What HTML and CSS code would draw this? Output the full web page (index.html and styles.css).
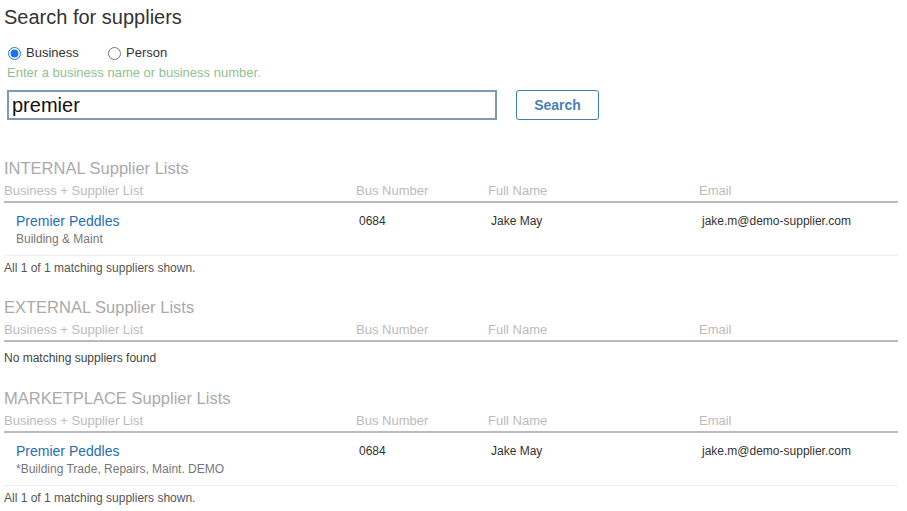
FILE: index.html
```html
<!DOCTYPE html>
<html lang="en">
<head>
    <meta charset="UTF-8">
    <meta name="viewport" content="width=device-width, initial-scale=1.0">
    <title>Search for suppliers</title>
    <link rel="stylesheet" href="styles.css">
</head>
<body>
    <div class="page">
        <h1 class="title">Search for suppliers</h1>

        <!-- Search form -->
        <div class="search-type">
            <label class="radio"><input type="radio" name="kind" checked> Business</label>
            <label class="radio"><input type="radio" name="kind"> Person</label>
        </div>
        <p class="hint">Enter a business name or business number.</p>
        <div class="search-row">
            <input type="text" class="search-input" value="premier">
            <button class="search-btn">Search</button>
        </div>

        <!-- Internal -->
        <div class="list">
            <h2 class="list-title">INTERNAL Supplier Lists</h2>
            <div class="grid head">
                <div>Business + Supplier List</div>
                <div>Bus Number</div>
                <div>Full Name</div>
                <div>Email</div>
            </div>
            <div class="grid row">
                <div class="biz">
                    <a href="#">Premier Peddles</a>
                    <span class="sub">Building &amp; Maint</span>
                </div>
                <div>0684</div>
                <div>Jake May</div>
                <div>jake.m@demo-supplier.com</div>
            </div>
            <p class="count">All 1 of 1 matching suppliers shown.</p>
        </div>

        <!-- External -->
        <div class="list">
            <h2 class="list-title">EXTERNAL Supplier Lists</h2>
            <div class="grid head">
                <div>Business + Supplier List</div>
                <div>Bus Number</div>
                <div>Full Name</div>
                <div>Email</div>
            </div>
            <p class="empty">No matching suppliers found</p>
        </div>

        <!-- Marketplace -->
        <div class="list">
            <h2 class="list-title">MARKETPLACE Supplier Lists</h2>
            <div class="grid head">
                <div>Business + Supplier List</div>
                <div>Bus Number</div>
                <div>Full Name</div>
                <div>Email</div>
            </div>
            <div class="grid row">
                <div class="biz">
                    <a href="#">Premier Peddles</a>
                    <span class="sub">*Building Trade, Repairs, Maint. DEMO</span>
                </div>
                <div>0684</div>
                <div>Jake May</div>
                <div>jake.m@demo-supplier.com</div>
            </div>
            <p class="count">All 1 of 1 matching suppliers shown.</p>
        </div>
    </div>
</body>
</html>
```

FILE: styles.css
```css
* {
    margin: 0;
    padding: 0;
    box-sizing: border-box;
}

body {
    font-family: 'Liberation Sans', Arial, sans-serif;
    color: #333;
    background: #fff;
}

.page {
    width: 894px;
    margin-left: 4px;
    padding-top: 5px;
}

.title {
    font-size: 20px;
    font-weight: normal;
    color: #333;
    line-height: 24px;
}

.search-type {
    display: flex;
    margin-top: 16px;
    margin-left: 3px;
    font-size: 13px;
    line-height: 16px;
}

.radio {
    display: flex;
    align-items: center;
    gap: 5px;
    width: 100px;
}

.radio input {
    width: 13px;
    height: 13px;
    margin: 0 0 0 1px;
    accent-color: #1a73e8;
}

.hint {
    margin-top: 5px;
    margin-left: 3px;
    font-size: 13px;
    line-height: 14px;
    color: #8fc18f;
}

.search-row {
    display: flex;
    align-items: center;
    gap: 19px;
    margin-top: 10px;
    margin-left: 3px;
}

.search-input {
    width: 490px;
    height: 30px;
    padding: 0 3px;
    border: 2px solid #7d9ab7;
    font-family: inherit;
    font-size: 20px;
    color: #111;
    outline: none;
}

.search-btn {
    width: 83px;
    height: 30px;
    background: #fff;
    border: 1px solid #3d7db8;
    border-radius: 3px;
    color: #4a7fb5;
    font-family: inherit;
    font-size: 14px;
    font-weight: bold;
    cursor: pointer;
}

.list {
    margin-top: 38px;
}

.list + .list {
    margin-top: 22px;
}

.list-title {
    font-size: 16.5px;
    font-weight: normal;
    color: #aaa;
    line-height: 20px;
}

.grid {
    display: grid;
    grid-template-columns: 352px 132px 211px 1fr;
}

.head {
    margin-top: 5px;
    padding-bottom: 2px;
    border-bottom: 2px solid #bbb;
    font-size: 13px;
    line-height: 16px;
    color: #bbb;
}

.row {
    padding: 10px 0 7px;
    border-bottom: 1px solid #eee;
    font-size: 12px;
    line-height: 16px;
    color: #333;
}

.row > div {
    padding-left: 3px;
}

.row > .biz {
    display: flex;
    flex-direction: column;
    padding-left: 12px;
}

.biz a {
    color: #1f6fb2;
    text-decoration: none;
    font-size: 14px;
    line-height: 17px;
}

.biz .sub {
    color: #777;
    font-size: 12px;
    line-height: 18px;
}

.count {
    margin-top: 5px;
    font-size: 12px;
    line-height: 14px;
    color: #555;
}

.empty {
    margin-top: 8px;
    font-size: 12px;
    line-height: 16px;
    color: #444;
}
```
